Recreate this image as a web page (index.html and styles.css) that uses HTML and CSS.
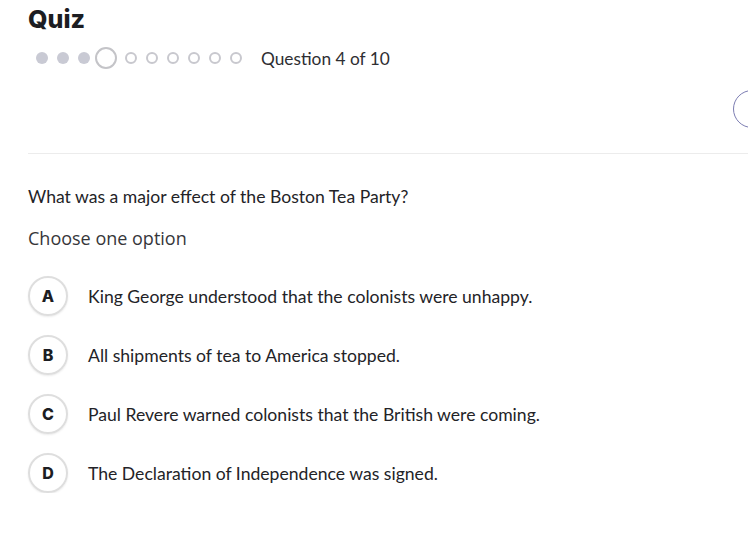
FILE: index.html
```html
<!DOCTYPE html>
<html lang="en">
<head>
    <meta charset="UTF-8">
    <meta name="viewport" content="width=device-width, initial-scale=1.0">
    <title>Quiz</title>
    <link rel="stylesheet" href="styles.css">
</head>
<body>
    <div class="page">
        <h1 class="title">Quiz</h1>

        <!-- progress dots: done, current, upcoming -->
        <div class="progress">
            <div class="dots">
                <span class="dot done"></span>
                <span class="dot done"></span>
                <span class="dot done"></span>
                <span class="dot current"></span>
                <span class="dot"></span>
                <span class="dot"></span>
                <span class="dot"></span>
                <span class="dot"></span>
                <span class="dot"></span>
                <span class="dot"></span>
            </div>
            <span class="progress-label">Question 4 of 10</span>
        </div>

        <button class="side-btn" aria-label="More"></button>

        <hr class="divider">

        <p class="question">What was a major effect of the Boston Tea Party?</p>
        <p class="hint">Choose one option</p>

        <ul class="options">
            <li class="option"><span class="letter">A</span><span class="answer">King George understood that the colonists were unhappy.</span></li>
            <li class="option"><span class="letter">B</span><span class="answer">All shipments of tea to America stopped.</span></li>
            <li class="option"><span class="letter">C</span><span class="answer">Paul Revere warned colonists that the British were coming.</span></li>
            <li class="option"><span class="letter">D</span><span class="answer">The Declaration of Independence was signed.</span></li>
        </ul>
    </div>
</body>
</html>
```

FILE: styles.css
```css
body {
    margin: 0;
    padding: 0;
    background: #fff;
    color: #222;
    font-family: Lato, "Open Sans", sans-serif;
    overflow: hidden;
}

.page {
    position: relative;
    padding: 0 0 0 28px;
}

.title {
    margin: 0;
    padding-top: 2px;
    font-family: Inter, sans-serif;
    font-weight: 800;
    font-size: 25px;
    line-height: 34px;
    color: #1c1d22;
}

.progress {
    display: flex;
    align-items: center;
    margin-top: 10px;
    height: 24px;
}

.dots {
    display: flex;
    align-items: center;
    gap: 9px;
    margin-left: 8px;
}

.dot {
    box-sizing: border-box;
    width: 12px;
    height: 12px;
    border: 2px solid #c8c8ce;
    border-radius: 50%;
}

.dot.done {
    border: none;
    background: #c9cad4;
}

.dot.current {
    width: 22px;
    height: 22px;
    border-color: #c4c4c8;
    margin: 0 -1px 0 -4px;
}

.progress-label {
    margin-left: 19px;
    font-size: 17.3px;
    color: #2e2e32;
}

.side-btn {
    position: absolute;
    left: 733px;
    top: 90px;
    width: 38px;
    height: 38px;
    border: 1.5px solid #7c7db2;
    border-radius: 50%;
    background: #fff;
    padding: 0;
}

.divider {
    border: none;
    border-top: 1.5px solid #ececec;
    margin: 83px 0 0 0;
}

.question {
    margin: 31px 0 0 0;
    font-size: 17.6px;
    line-height: 24px;
    color: #232327;
}

.hint {
    margin: 17px 0 0 0;
    font-family: "Open Sans", sans-serif;
    font-size: 18px;
    line-height: 24px;
    color: #36363a;
}

.options {
    list-style: none;
    margin: 26px 0 0 0;
    padding: 0;
    display: flex;
    flex-direction: column;
    gap: 19px;
}

.option {
    display: flex;
    align-items: center;
    gap: 20px;
}

.letter {
    box-sizing: border-box;
    width: 40px;
    height: 40px;
    border: 2px solid #dedede;
    border-radius: 50%;
    display: flex;
    justify-content: center;
    align-items: center;
    font-family: Inter, sans-serif;
    font-weight: 800;
    font-size: 16px;
    color: #1c1d22;
    box-shadow: 0 1px 2px rgba(0, 0, 0, 0.08);
}

.answer {
    font-size: 17.6px;
    color: #232327;
}
```
